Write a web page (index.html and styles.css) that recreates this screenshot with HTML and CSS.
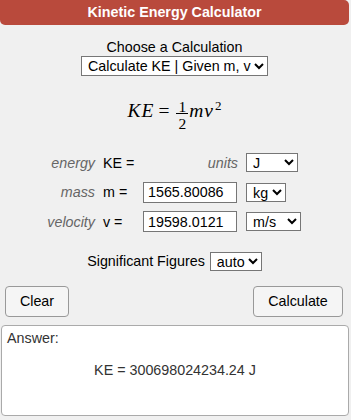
FILE: index.html
```html
<!DOCTYPE html>
<html lang="en">
<head>
	<meta charset="UTF-8">
	<title>Kinetic Energy Calculator</title>
	<link rel="stylesheet" href="styles.css">
</head>
<body>

<div class="calc">
	<div class="calc-title">Kinetic Energy Calculator</div>

	<div class="calc-choose">
		<div class="choose-label">Choose a Calculation</div>
		<select class="calc-type" id="calc-type">
			<option>Calculate KE | Given m, v</option>
			<option>Calculate m | Given KE, v</option>
			<option>Calculate v | Given KE, m</option>
		</select>
	</div>

	<div class="formula">
		<span class="mi">KE</span><span class="mo">=</span><span class="frac"><span class="num">1</span><span class="den">2</span></span><span class="mi">mv</span><sup class="sup">2</sup>
	</div>

	<div class="fields">
		<span class="field-label">energy</span>
		<span class="field-sym">KE =</span>
		<span class="field-label">units</span>
		<select class="unit unit-j">
			<option>J</option>
			<option>kJ</option>
			<option>MJ</option>
		</select>

		<span class="field-label">mass</span>
		<span class="field-sym">m =</span>
		<input type="text" class="field-input" id="mass" value="1565.80086">
		<select class="unit unit-kg">
			<option>kg</option>
			<option>g</option>
		</select>

		<span class="field-label">velocity</span>
		<span class="field-sym">v =</span>
		<input type="text" class="field-input" id="velocity" value="19598.0121">
		<select class="unit unit-ms">
			<option>m/s</option>
			<option>km/h</option>
		</select>
	</div>

	<div class="sigfig">
		<span>Significant Figures</span>
		<select class="unit unit-sig">
			<option>auto</option>
			<option>3</option>
			<option>4</option>
		</select>
	</div>

	<div class="buttons">
		<button class="btn btn-clear" id="clear-btn">Clear</button>
		<button class="btn btn-calc" id="calc-btn">Calculate</button>
	</div>

	<div class="answer">
		<div class="answer-label">Answer:</div>
		<div class="answer-value" id="answer">KE = 300698024234.24 J</div>
	</div>
</div>

</body>
</html>
```

FILE: styles.css
```css
html,
body {
    margin: 0;
    background: #f0f0f0;
    font-family: "Liberation Sans", Arial, sans-serif;
    font-size: 14.3px;
    color: #000;
}
.calc {
    width: 349px;
}
.calc-title {
    height: 25px;
    line-height: 25px;
    background: #b94a3c;
    color: #fff;
    font-weight: bold;
    text-align: center;
    border-radius: 0 5px 5px 5px;
}
.calc-choose {
    margin-top: 14px;
    text-align: center;
}
.choose-label {
    line-height: 17px;
}
select {
    font-family: "Liberation Sans", Arial, sans-serif;
    font-size: 14.3px;
    color: #000;
    background: #fff;
    border: 1px solid #767676;
    border-radius: 0;
    height: 19px;
    padding: 0 0 0 2px;
}
.calc-type {
    display: block;
    margin: 0 auto;
    width: 187px;
    height: 20px;
}

/* formula */
.formula {
    margin-top: 24px;
    text-align: center;
    font-family: "Liberation Serif", "Times New Roman", serif;
    font-size: 19.5px;
    line-height: 22px;
}
.mi {
    font-style: italic;
    letter-spacing: 1px;
}
.mo {
    margin: 0 5px 0 4px;
}
.frac {
    display: inline-block;
    vertical-align: -12px;
    text-align: center;
    font-size: 15.5px;
    margin: 0 1px 0 2px;
}
.num {
    display: block;
    line-height: 12px;
    padding: 0 2px;
    border-bottom: 1px solid #000;
}
.den {
    display: block;
    line-height: 12px;
    padding-top: 4.5px;
}
.sup {
    font-size: 13px;
    line-height: 0;
    vertical-align: 7px;
    margin-left: 1px;
}

/* fields */
.fields {
    margin-top: 22px;
    display: grid;
    grid-template-columns: 95px 32px 95px auto;
    grid-template-rows: repeat(3, 21px);
    column-gap: 8px;
    row-gap: 8.5px;
    align-items: center;
    justify-items: start;
}
.field-label {
    justify-self: end;
    font-style: italic;
    color: #666;
}
.field-input {
    box-sizing: border-box;
    width: 94px;
    height: 21px;
    padding: 1px 4px;
    border: 1px solid #767676;
    border-radius: 0;
    font-family: "Liberation Sans", Arial, sans-serif;
    font-size: 14.3px;
    color: #000;
    background: #fff;
}
.unit-j {
    width: 52px;
}
.unit-kg {
    width: 40px;
}
.unit-ms {
    width: 55px;
}
.unit-sig {
    width: 52px;
}

.sigfig {
    margin-top: 19.5px;
    height: 19px;
    display: flex;
    justify-content: center;
    align-items: center;
    gap: 5px;
}

.buttons {
    margin-top: 15px;
    display: flex;
    justify-content: space-between;
    padding: 0 6px 0 5px;
}
.btn {
    height: 31px;
    font-family: "Liberation Sans", Arial, sans-serif;
    font-size: 14.3px;
    color: #000;
    background: #f5f5f5;
    border: 1px solid #999;
    border-radius: 4px;
    padding: 0;
}
.btn-clear {
    width: 64px;
}
.btn-calc {
    width: 90px;
}

.answer {
    box-sizing: border-box;
    margin: 8px 0 0 1px;
    width: 348px;
    height: 91px;
    padding: 4px 5px;
    background: #fff;
    border: 1px solid #aaa;
    border-radius: 4px;
}
.answer-label {
    color: #333;
}
.answer-value {
    margin-top: 16px;
    text-align: center;
    color: #333;
}
```
